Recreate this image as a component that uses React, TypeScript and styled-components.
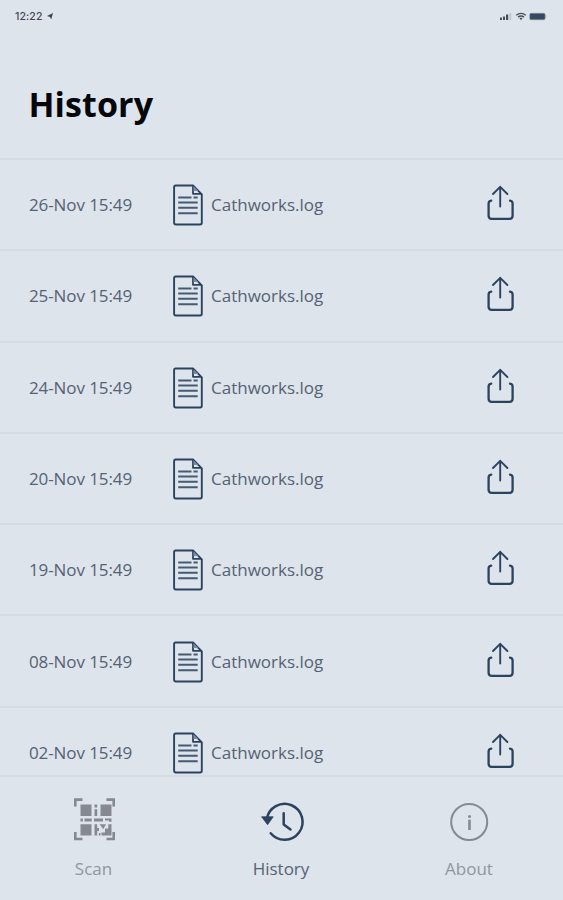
import React from "react";
import styled, { createGlobalStyle } from "styled-components";

const navy = "#2c4360";
const gray = "#868990";

const GlobalStyle = createGlobalStyle`
  * { box-sizing: border-box; }
  body {
    margin: 0;
    background: #dde4eb;
    font-family: "Open Sans", "Noto Sans", sans-serif;
  }
`;

const Screen = styled.div`
  display: flex;
  flex-direction: column;
  width: 563px;
  height: 900px;
  overflow: hidden;
  background: #dde4eb;
`;

const StatusBar = styled.header`
  display: flex;
  flex: none;
  align-items: center;
  justify-content: space-between;
  height: 32px;
  padding: 1px 16px 0 15px;
`;

const StatusGroup = styled.div`
  display: flex;
  align-items: center;
  gap: 4px;
`;

const Clock = styled.span`
  font-family: Inter, "Liberation Sans", sans-serif;
  font-size: 10.5px;
  font-weight: 500;
  line-height: 12px;
  letter-spacing: 0.12px;
  color: #3e4650;
`;

const TitleArea = styled.div`
  flex: none;
  height: 126px;
  padding: 48px 28.5px 0;
`;

const Title = styled.h1`
  margin: 0;
  font-size: 34px;
  line-height: 48px;
  font-weight: 700;
  letter-spacing: 0.1px;
  color: #05070a;
`;

const List = styled.ul`
  flex: 1;
  min-height: 0;
  margin: 0;
  padding: 0;
  overflow: hidden;
  list-style: none;
`;

const Row = styled.li`
  display: grid;
  grid-template-columns: 144px 38px 1fr 28px;
  align-items: center;
  height: 91.3px;
  padding: 1px 48px 0 29px;
  border-top: 2px solid #d4dbe3;
`;

const RowText = styled.span<{ $tight?: boolean }>`
  font-size: 17px;
  line-height: 24px;
  letter-spacing: ${(p) => (p.$tight ? "-0.1px" : "0")};
  color: #566274;
  white-space: nowrap;
`;

const ShareButton = styled.button`
  display: flex;
  padding: 0;
  border: 0;
  background: none;
  margin-top: -4px;
`;

const TabBar = styled.nav`
  display: grid;
  flex: none;
  grid-template-columns: 187px 188px 188px;
  height: 125px;
  border-top: 2px solid #d5dce3;
`;

const Tab = styled.a<{ $active?: boolean }>`
  display: flex;
  flex-direction: column;
  align-items: center;
  padding-top: 20px;
  color: ${(p) => (p.$active ? navy : gray)};
`;

const TabLabel = styled.span<{ $active?: boolean }>`
  margin-top: 16px;
  font-size: 17px;
  line-height: 24px;
  color: ${(p) => (p.$active ? "#566274" : "#91969f")};
`;

const Glyph = styled.svg`
  display: block;
  flex: none;
  overflow: visible;
`;

const LocationIcon = () => (
  <Glyph width="6" height="7" viewBox="0 0 6 7">
    <path d="M0 3 6 0 4.2 6.5 3 4Z" fill="#3e4650" />
  </Glyph>
);

const SignalIcon = () => (
  <Glyph width="12" height="7" viewBox="0 0 12 7">
    <path d="M0 4.5h2V7H0zM3 3.5h2V7H3zM6 1.5h2.2v5.5H6z" fill="#46505c" />
    <path d="M9.4 0h1.8v7H9.4z" fill="#bcc5cf" />
  </Glyph>
);

const WifiIcon = () => (
  <Glyph width="10" height="7" viewBox="-1.5 0 10 7" fill="none" stroke="#46505c" strokeWidth="1.4">
    <path d="M-1.3 2.2Q3.5-1.4 8.3 2.2M.5 4.1Q3.5 2 6.5 4.1" />
    <path d="M1.9 5.1Q3.5 4.2 5.1 5.1L3.5 7.2Z" fill="#46505c" stroke="none" />
  </Glyph>
);

const BatteryIcon = () => (
  <Glyph width="17" height="7" viewBox="0 0 17 7">
    <rect x="-.2" y=".3" width="15.2" height="6.4" rx="1.3" fill="#34495f" stroke="#7f8b99" strokeWidth=".6" />
    <path d="M15.7 2.2v2.6" stroke="#8a95a2" strokeWidth=".8" />
  </Glyph>
);

const FileIcon = () => (
  <Glyph width="30" height="42" viewBox="0 0 30 42" fill="none" stroke={navy} strokeWidth="1.9" strokeLinejoin="round">
    <path d="M2.6 1.5H20L28.8 10.3V38.8Q28.8 40.5 27.1 40.5H2.8Q1.1 40.5 1.1 38.8V3Q1.1 1.5 2.6 1.5Z" />
    <path d="M20 1.8V9.8H28.3" strokeWidth="1.8" />
    <path d="M20.5 2.2V7L25.5 7Z" fill="#7d8a9b" stroke="none" />
    <path d="M5.2 13.4H18.5M20.5 13.4H24.7M5.2 18.5H24.7M5.2 23.8H24.7M5.2 29.3H24.7" stroke="#465a73" strokeWidth="2" />
  </Glyph>
);

const ShareIcon = () => (
  <Glyph width="28" height="36" viewBox="0 0 28 36" fill="none" stroke={navy} strokeWidth="2.3" strokeLinecap="round" strokeLinejoin="round">
    <path d="M13.2 21.5V1.8M6 9 13.2 1.8 20.4 9" strokeWidth="1.9" />
    <path d="M4.2 15.7Q1.6 16 1.6 18.5V30.8Q1.6 33.8 4.6 33.8H22.6Q25.6 33.8 25.6 30.8V18.5Q25.6 16 23 15.7" />
  </Glyph>
);

const ScanIcon = () => (
  <Glyph width="42" height="44" viewBox="0 0 42 44" fill="currentColor">
    <path
      d="M2.3 9.5V2.6H9.5M33.5 2.6H40.7V9.5M2.3 35V42H9.5M33.5 42H40.7V35"
      fill="none"
      stroke="currentColor"
      strokeWidth="2.6"
    />
    <path d="M7.5 7.5H18.5V19H7.5ZM27.5 7.5H38.5V19H27.5ZM7.5 27.2H18.5V38.5H7.5Z" />
    <path d="M21.5 7.5H24.2V10.5H21.5ZM21.5 12.2H24.2V19H21.5Z" />
    <path d="M7.5 21.6H9.9V24.4H7.5ZM11.5 21.6H18.7V24.4H11.5ZM21 21.6H30V24.4H21ZM32 21.6H38.5V24.8H36V23.5H32Z" />
    <path d="M21.5 27.2H24.2V31H26V34H24.2V38.5H21.5ZM26.7 27.2H33L30.2 32.2ZM35.3 27.2H38.5V38.5H28.5V35.5H32V31.5H35.3ZM25.9 36H27.5V38.5H25.9Z" />
  </Glyph>
);

const HistoryIcon = () => (
  <Glyph width="42" height="44" viewBox="0 0 42 44" fill="none" stroke="currentColor">
    <path d="M6.8 22A18 18 0 1 1 10.7 36.3" strokeWidth="2.5" strokeLinecap="round" />
    <path d="M1.6 19.8H13.2L7.6 27.7Z" fill="currentColor" strokeWidth=".8" strokeLinejoin="round" />
    <path d="M23.7 16.3V27.5L30.5 32.5" strokeWidth="2.5" strokeLinecap="round" strokeLinejoin="round" />
  </Glyph>
);

const InfoIcon = () => (
  <Glyph width="42" height="44" viewBox="0 0 42 44" fill="none" stroke="currentColor">
    <circle cx="21.2" cy="25" r="18" strokeWidth="2" />
    <path d="M21.5 22.7V33" strokeWidth="2.6" />
    <circle cx="21.5" cy="19.5" r="1.5" fill="currentColor" stroke="none" />
  </Glyph>
);

const dates = ["26-Nov", "25-Nov", "24-Nov", "20-Nov", "19-Nov", "08-Nov", "02-Nov"];

export default function App() {
  return (
    <Screen>
      <GlobalStyle />
      <StatusBar>
        <StatusGroup>
          <Clock>12:22</Clock>
          <LocationIcon />
        </StatusGroup>
        <StatusGroup>
          <SignalIcon />
          <WifiIcon />
          <BatteryIcon />
        </StatusGroup>
      </StatusBar>
      <TitleArea>
        <Title>History</Title>
      </TitleArea>
      <List>
        {dates.map((date) => (
          <Row key={date}>
            <RowText $tight>{date} 15:49</RowText>
            <FileIcon />
            <RowText>Cathworks.log</RowText>
            <ShareButton aria-label="Share">
              <ShareIcon />
            </ShareButton>
          </Row>
        ))}
      </List>
      <TabBar>
        <Tab>
          <ScanIcon />
          <TabLabel>Scan</TabLabel>
        </Tab>
        <Tab $active>
          <HistoryIcon />
          <TabLabel $active>History</TabLabel>
        </Tab>
        <Tab>
          <InfoIcon />
          <TabLabel>About</TabLabel>
        </Tab>
      </TabBar>
    </Screen>
  );
}
